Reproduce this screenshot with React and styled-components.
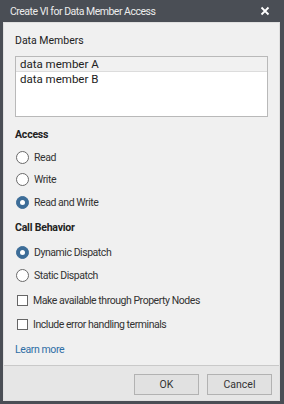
import React from "react";
import styled, { createGlobalStyle } from "styled-components";

const Global = createGlobalStyle`
  html, body { margin: 0; padding: 0; background: #4a4e55; }
  * { box-sizing: border-box; }
`;

const Frame = styled.div`
  width: 284px;
  height: 404px;
  background: #4a4e55;
  display: flex;
  flex-direction: column;
  font-family: Roboto, "Noto Sans", sans-serif;
  font-size: 10.5px;
  color: #222;
  overflow: hidden;
`;

const TitleBar = styled.div`
  height: 22px;
  flex: none;
  display: flex;
  align-items: center;
  justify-content: space-between;
  padding: 0 14px 0 10px;
  color: #ececec;
  font-size: 10.5px;
  letter-spacing: -0.5px;
`;

const Body = styled.div`
  flex: 1;
  margin: 0 4px 3px 3px;
  display: flex;
  flex-direction: column;
  background: #f0f0f0;
  border: 1px solid #e0e0e0;
`;

const Content = styled.div`
  flex: 1;
  padding: 10px 11px 0 11px;
  display: flex;
  flex-direction: column;
`;

const Label = styled.div`
  height: 16px;
  line-height: 16px;
  font-size: 10.5px;
  font-weight: ${(p) => (p.bold ? 700 : 400)};
  margin-top: ${(p) => p.mt || 0}px;
  margin-bottom: ${(p) => p.mb || 0}px;
  letter-spacing: ${(p) => (p.bold ? "-0.2px" : "0")};
`;

const ListBox = styled.div`
  height: 61px;
  background: #fff;
  border: 1px solid #b9b9b9;
  display: flex;
  flex-direction: column;
`;

const ListItem = styled.div`
  height: 15px;
  line-height: 15px;
  padding-left: 4px;
  font-size: 11.5px;
  background: ${(p) => (p.selected ? "#f1f1f1" : "transparent")};
  border-bottom: 1px solid ${(p) => (p.selected ? "#dcdcdc" : "transparent")};
`;

const Group = styled.div`
  display: flex;
  flex-direction: column;
  margin-top: ${(p) => p.mt || 0}px;
`;

const OptionRow = styled.div`
  height: ${(p) => p.h || 22.5}px;
  display: flex;
  align-items: center;
  gap: ${(p) => p.gap || 5}px;
  color: #333;
  letter-spacing: -0.45px;
`;

const RadioCircle = styled.span`
  width: 13px;
  height: 13px;
  border-radius: 50%;
  flex: none;
  margin-left: 1px;
  border: 1px solid ${(p) => (p.checked ? "#3d6d98" : "#6a6a6a")};
  background: ${(p) => (p.checked ? "#3d6d98" : "#fff")};
  display: flex;
  align-items: center;
  justify-content: center;
  &::after {
    content: "";
    width: 5px;
    height: 5px;
    border-radius: 50%;
    background: ${(p) => (p.checked ? "#fff" : "transparent")};
  }
`;

const CheckBox = styled.span`
  width: 11px;
  height: 11px;
  flex: none;
  margin-left: 2px;
  border: 1px solid #666;
  background: #fff;
`;

const Link = styled.a`
  color: #2f6ea6;
  text-decoration: none;
  height: 16px;
  line-height: 16px;
  margin-top: 5px;
  display: block;
  letter-spacing: -0.4px;
`;

const Footer = styled.div`
  height: 35px;
  flex: none;
  background: #e6e6e6;
  border-top: 1px solid #c9c9c9;
  display: flex;
  justify-content: flex-end;
  align-items: flex-start;
  gap: 8px;
  padding: 8px 7px 0 0;
`;

const Button = styled.button`
  width: 65px;
  height: 21px;
  background: #e1e1e1;
  border: 1px solid #b2b2b2;
  font-family: inherit;
  font-size: 10.5px;
  color: #333;
  padding: 0;
`;

const Close = () => (
  <svg width="10" height="10" viewBox="0 0 10 10">
    <path d="M1.5 1.5 L8.5 8.5 M8.5 1.5 L1.5 8.5" stroke="#fff" strokeWidth="1.8" />
  </svg>
);

const Radio = ({ checked, h, children }) => (
  <OptionRow h={h}>
    <RadioCircle checked={checked} />
    <span>{children}</span>
  </OptionRow>
);

const Check = ({ children }) => (
  <OptionRow h={24} gap={5}>
    <CheckBox />
    <span>{children}</span>
  </OptionRow>
);

export default function App() {
  return (
    <Frame>
      <Global />
      <TitleBar>
        <span>Create VI for Data Member Access</span>
        <Close />
      </TitleBar>
      <Body>
        <Content>
          <Label mb={7}>Data Members</Label>
          <ListBox>
            <ListItem selected>data member A</ListItem>
            <ListItem>data member B</ListItem>
          </ListBox>
          <Label bold mt={10} mb={3}>Access</Label>
          <Group>
            <Radio>Read</Radio>
            <Radio>Write</Radio>
            <Radio checked>Read and Write</Radio>
          </Group>
          <Label bold mt={6} mb={5}>Call Behavior</Label>
          <Group>
            <Radio checked h={23}>Dynamic Dispatch</Radio>
            <Radio h={23}>Static Dispatch</Radio>
          </Group>
          <Group mt={2}>
            <Check>Make available through Property Nodes</Check>
            <Check>Include error handling terminals</Check>
          </Group>
          <Link>Learn more</Link>
        </Content>
        <Footer>
          <Button>OK</Button>
          <Button>Cancel</Button>
        </Footer>
      </Body>
    </Frame>
  );
}
